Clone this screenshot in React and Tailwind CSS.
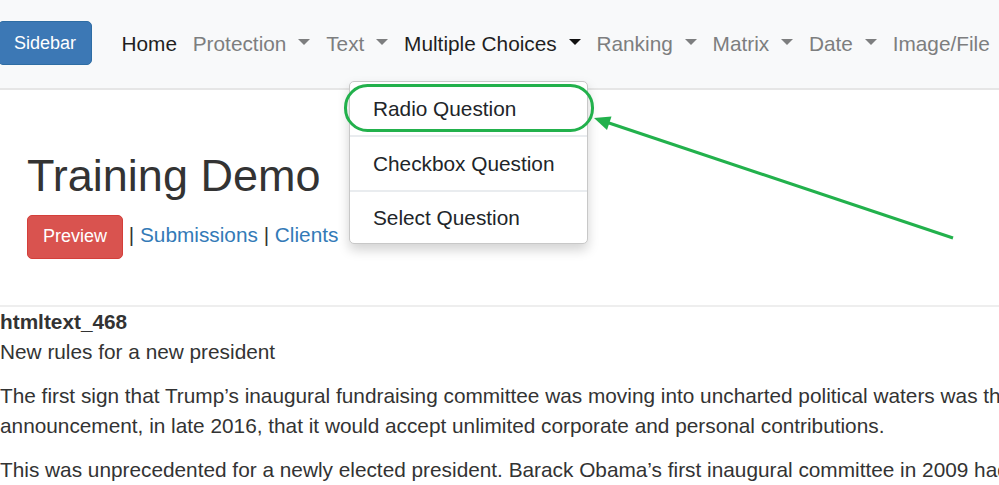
import React from "react";

function Caret({ dark }) {
  return (
    <span
      className={`ml-[12px] mb-[4px] inline-block h-0 w-0 border-x-[6px] border-t-[6px] border-x-transparent ${
        dark ? "border-t-[#111]" : "border-t-[#7d7e7f]"
      }`}
    />
  );
}

function NavItem({ label, dark, caret }) {
  return (
    <div
      className={`flex items-center px-[7.9px] leading-[30px] ${
        dark ? "text-[#1f1f1f]" : "text-[#7d7e7f]"
      }`}
    >
      <span>{label}</span>
      {caret && <Caret dark={dark} />}
    </div>
  );
}

export default function App() {
  return (
    <div
      className="relative h-[485px] w-[999px] overflow-hidden bg-white text-[20.8px] text-[#333]"
      style={{ fontFamily: '"Liberation Sans", Arial, sans-serif' }}
    >
      {/* Navbar */}
      <div className="flex h-[90px] items-center border-b-2 border-[#e6e6e6] bg-[#f8f9fa]">
        <div className="mb-[2px] ml-[-2px] flex h-[44px] w-[94px] items-center justify-center rounded-[5px] border border-[#2e6da4] bg-[#3c78b5] text-[18px] text-white">
          Sidebar
        </div>
        <div className="ml-[21.6px] flex items-center">
          <NavItem label="Home" dark />
          <NavItem label="Protection" caret />
          <NavItem label="Text" caret />
          <NavItem label="Multiple Choices" dark caret />
          <NavItem label="Ranking" caret />
          <NavItem label="Matrix" caret />
          <NavItem label="Date" caret />
          <NavItem label="Image/File" />
        </div>
      </div>

      {/* Header area */}
      <div className="pl-[27px] pt-[61px]">
        <h1 className="text-[45px] leading-[1.1] text-[#333]">Training Demo</h1>
        <div className="mt-[14px] flex items-start">
          <div className="flex h-[44px] w-[96px] items-center justify-center rounded-[5px] border border-[#d43f3a] bg-[#d9534f] text-[18px] text-white">
            Preview
          </div>
          <div className="mt-[6.5px] whitespace-pre leading-[28.5px]">
            <span> | </span>
            <span className="text-[#337ab7]">Submissions</span>
            <span> | </span>
            <span className="text-[#337ab7]">Clients</span>
          </div>
        </div>
      </div>

      {/* Content */}
      <div className="mt-[46.5px] border-t-2 border-[#eeeeee] leading-[30px] whitespace-nowrap">
        <div className="font-bold">htmltext_468</div>
        <div>New rules for a new president</div>
        <p className="mt-[14px]">
          The first sign that Trump’s inaugural fundraising committee was moving into uncharted political waters was the
          <br />
          announcement, in late 2016, that it would accept unlimited corporate and personal contributions.
        </p>
        <p className="mt-[14px]">
          This was unprecedented for a newly elected president. Barack Obama’s first inaugural committee in 2009 had
        </p>
      </div>

      {/* Dropdown menu */}
      <div className="absolute left-[349px] top-[81px] w-[239px] rounded-[5px] border border-[#c8c8c8] bg-white text-[#212529] shadow-[0_6px_12px_rgba(0,0,0,0.175)]">
        <div className="flex h-[53px] items-center pl-[23px]">Radio Question</div>
        <div className="h-[2px] bg-[#e9ecef]" />
        <div className="flex h-[53px] items-center pl-[23px]">Checkbox Question</div>
        <div className="h-[2px] bg-[#e9ecef]" />
        <div className="flex h-[51px] items-center pl-[23px]">Select Question</div>
      </div>

      {/* Annotation */}
      <svg
        className="pointer-events-none absolute left-0 top-0"
        width="999"
        height="485"
        viewBox="0 0 999 485"
      >
        <rect
          x="345.5"
          y="85.5"
          width="247"
          height="45"
          rx="22"
          ry="22"
          fill="none"
          stroke="#22b14c"
          strokeWidth="3"
        />
        <line x1="953" y1="238" x2="606" y2="122" stroke="#22b14c" strokeWidth="3" />
        <polygon points="594,118 611.5,116.5 607,130" fill="#22b14c" />
      </svg>
    </div>
  );
}
